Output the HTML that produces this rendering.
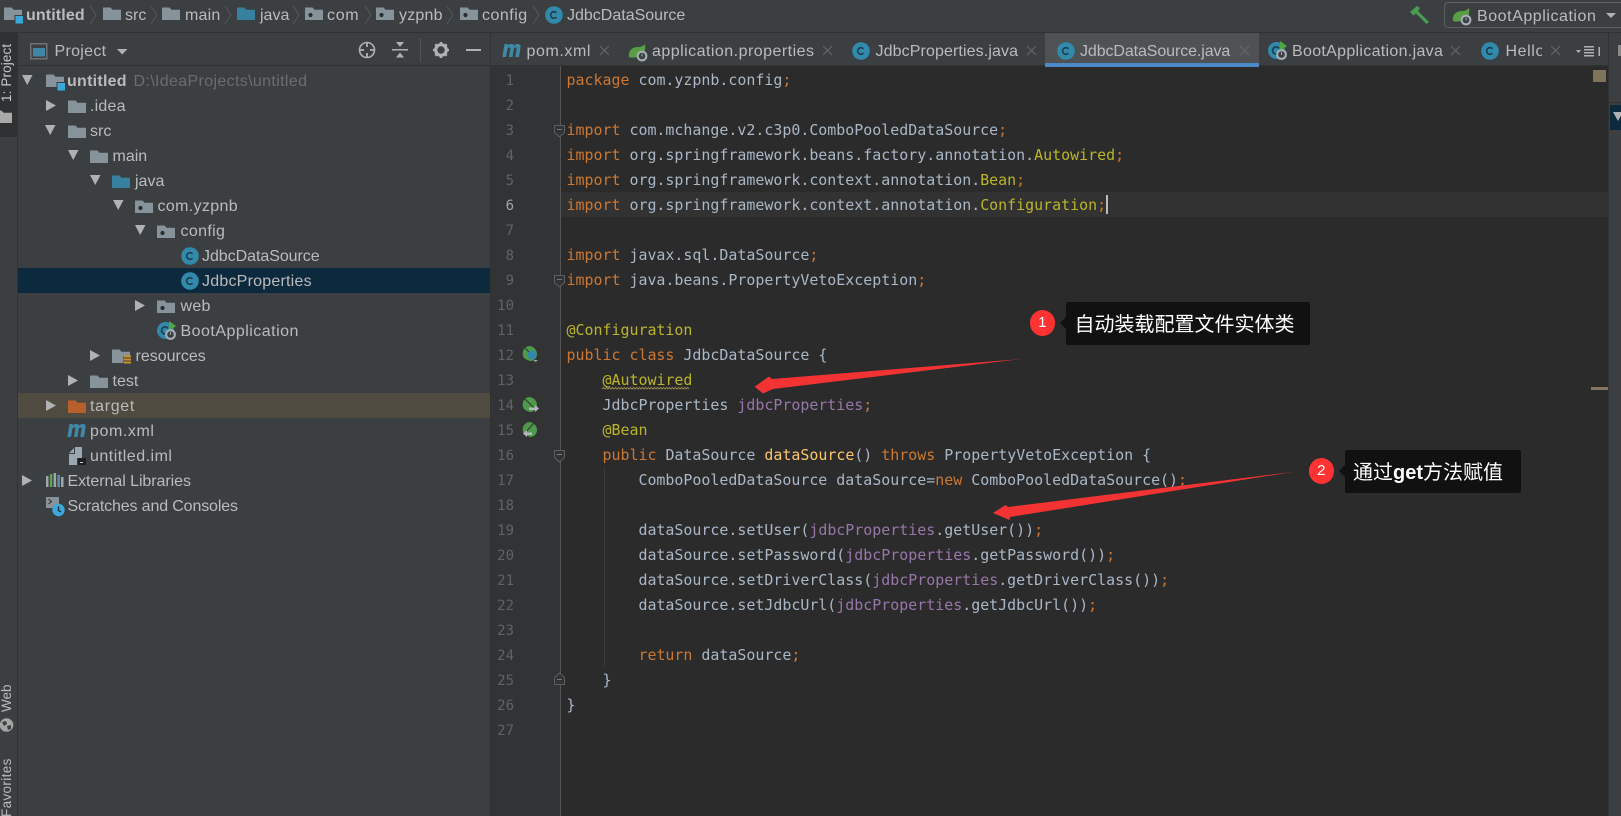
<!DOCTYPE html>
<html><head><meta charset="utf-8"><style>
html,body{margin:0;padding:0;width:1621px;height:816px;overflow:hidden;background:#3c3f41}
#r{position:relative;width:1621px;height:816px;overflow:hidden;background:#3c3f41;font-family:"Liberation Sans","Noto Sans CJK SC",sans-serif}
.b{position:absolute}
.t{position:absolute;white-space:pre;font-size:16px;line-height:25px;height:25px;color:#bbb;margin-top:1px}
.c{position:absolute;left:566.5px;white-space:pre;font-family:"DejaVu Sans Mono","Liberation Mono",monospace;font-size:14.95px;line-height:25px;height:25px;color:#a9b7c6}
.n{position:absolute;width:24px;left:490px;text-align:right;font-family:"DejaVu Sans Mono",monospace;font-size:14px;line-height:25px;color:#606366;margin-top:1px}
.c i{font-style:normal;color:#cc7832}.c u{text-decoration:none;color:#bbb529}.c s{text-decoration:none;color:#9876aa}.c b{font-weight:normal;color:#ffc66d}
svg.i{position:absolute;overflow:visible}
.rot{position:absolute;white-space:pre;font-size:13.5px;line-height:16px;color:#bbb;transform-origin:0 0;transform:rotate(-90deg)}
</style></head><body><div id="r">
<svg width="0" height="0" style="position:absolute"><defs>
<path id="f" d="M0 0.5h7.5l2 2.2H18V13H0z"/>
<g id="pk"><path d="M0 0.5h7.5l2 2.2H18V13H0z" fill="#87939a"/><circle cx="5.5" cy="8" r="2.1" fill="#2b2d2f"/></g>
<g id="mod"><path d="M0 0.5h7.5l2 2.2H18V13H0z" fill="#87939a"/><rect x="10.5" y="8" width="8" height="8" fill="#3c3f41"/><rect x="11.5" y="9" width="7.5" height="7.5" fill="#3aa8db"/></g>
<g id="cc"><circle cx="9" cy="9" r="8.8" fill="#3189ab"/><path d="M11.5 6.9A3.3 3.3 0 1 0 11.5 11.1" fill="none" stroke="#1f3d4b" stroke-width="1.6"/></g>
<g id="gear"><circle cx="0" cy="0" r="5.4" fill="#a3aeb6"/><circle cx="0" cy="0" r="3.3" fill="#3c3f41"/><path d="M0-2.400v2.800" stroke="#a3aeb6" stroke-width="1"/></g>
<g id="sp"><path d="M0 13C-1 6 4 3 9 3c3 0 5-1 7-3 1 6-1 12-7 13-3 .5-6 1-9 0z" fill="#5b9d44"/><use href="#gear" x="13" y="12"/></g>
<g id="bc"><circle cx="8.5" cy="9.5" r="8.5" fill="#3189ab"/><path d="M11 7.300A3.600 3.600 0 1 0 11 11.700" fill="none" stroke="#1f3d4b" stroke-width="1.700"/><path d="M12 0l7 5-7 5z" fill="#4fa83f"/><use href="#gear" x="13.500" y="13.500"/></g>
<path id="ra" d="M0 0l10 5.500L0 11z"/>
<path id="da" d="M0 0h10.500L5.200 10z"/>
<path id="x" d="M0 0L9 9M9 0L0 9" stroke="#63676a" stroke-width="1.100" fill="none"/>
<path id="ch" d="M0 4l6 9-6 9" stroke="#55595c" stroke-width="1" fill="none"/>
<path id="fd" d="M.5 .5h10v7l-5 4.500-5-4.500z" fill="#313335" stroke="#5c5f62"/>
<path id="lf" d="M8 0a8 8 0 0 0-6 3 8 8 0 0 0 0 9c1 1 3 2 6 3 4 0 7-3 7-7C15 4 12 1 8 0z" fill="#4f9a4a"/>
</defs></svg>

<!-- top bar -->
<div class="b" style="left:0;top:32px;width:1621px;height:1px;background:#323232"></div>
<svg class="i" style="left:4px;top:7px" width="19" height="17"><use href="#mod"/></svg>
<div class="t" style="left:26px;top:2px;font-weight:bold;letter-spacing:.12px">untitled</div>
<svg class="i" style="left:90px;top:2px" width="7" height="27"><use href="#ch"/></svg>
<svg class="i" style="left:102.500px;top:7px" width="18" height="14" fill="#87939a"><use href="#f"/></svg>
<div class="t" style="left:125px;top:2px">src</div>
<svg class="i" style="left:151px;top:2px" width="7" height="27"><use href="#ch"/></svg>
<svg class="i" style="left:162px;top:7px" width="18" height="14" fill="#87939a"><use href="#f"/></svg>
<div class="t" style="left:185px;top:2px;letter-spacing:.2px">main</div>
<svg class="i" style="left:225px;top:2px" width="7" height="27"><use href="#ch"/></svg>
<svg class="i" style="left:237px;top:7px" width="18" height="14" fill="#37809f"><use href="#f"/></svg>
<div class="t" style="left:260px;top:2px">java</div>
<svg class="i" style="left:293px;top:2px" width="7" height="27"><use href="#ch"/></svg>
<svg class="i" style="left:305px;top:7px" width="18" height="14"><use href="#pk"/></svg>
<div class="t" style="left:327px;top:2px;letter-spacing:.7px">com</div>
<svg class="i" style="left:365px;top:2px" width="7" height="27"><use href="#ch"/></svg>
<svg class="i" style="left:376px;top:7px" width="18" height="14"><use href="#pk"/></svg>
<div class="t" style="left:399px;top:2px;letter-spacing:.2px">yzpnb</div>
<svg class="i" style="left:447px;top:2px" width="7" height="27"><use href="#ch"/></svg>
<svg class="i" style="left:460px;top:7px" width="18" height="14"><use href="#pk"/></svg>
<div class="t" style="left:482px;top:2px;letter-spacing:.5px">config</div>
<svg class="i" style="left:533px;top:2px" width="7" height="27"><use href="#ch"/></svg>
<svg class="i" style="left:545px;top:6px" width="18" height="18"><use href="#cc"/></svg>
<div class="t" style="left:567px;top:2px">JdbcDataSource</div>
<svg class="i" style="left:1410px;top:6px" width="20" height="18"><path d="M0 6L7 0l3 2-2 3 11 11-2.500 2L6 7.500 3.500 9.500z" fill="#499c54"/></svg>
<div class="b" style="left:1444px;top:2px;width:190px;height:26px;border:1px solid #5e6060;border-radius:4px;box-sizing:border-box"></div>
<svg class="i" style="left:1453px;top:8px" width="19" height="18"><use href="#sp"/></svg>
<div class="t" style="left:1477px;top:3px;letter-spacing:.55px">BootApplication</div>
<svg class="i" style="left:1606px;top:13px" width="10" height="5" fill="#afb1b3"><path d="M0 0h10L5 5z"/></svg>

<!-- left strip -->
<div class="b" style="left:0;top:33px;width:17px;height:104px;background:#2f3133"></div>
<div class="b" style="left:17px;top:33px;width:1px;height:783px;background:#323232"></div>
<div class="rot" style="left:-1px;top:102px;color:#c8c8c8;letter-spacing:.12px">1: Project</div>
<svg class="i" style="left:-6px;top:110px" width="18" height="13" fill="#a9a9a9"><use href="#f"/></svg>
<div class="rot" style="left:-1px;top:712px">Web</div>
<svg class="i" style="left:0;top:718px" width="14" height="14"><circle cx="6.500" cy="7" r="6.800" fill="#a5a5a5"/><path d="M2 4l4-1 1 3-3 2zM7 8l4-1 0 4-3 1z" fill="#3c3f41"/></svg>
<div class="rot" style="left:-1px;top:817px;letter-spacing:.35px">Favorites</div>

<!-- project header -->
<div class="b" style="left:18px;top:65px;width:472px;height:1px;background:#323232"></div>
<svg class="i" style="left:30px;top:43px" width="18" height="16"><rect x=".75" y=".75" width="16" height="15" fill="none" stroke="#6e7072" stroke-width="1.500"/><rect x="3" y="5" width="12" height="8.500" fill="#3f86a5"/></svg>
<div class="t" style="left:54.500px;top:38px;letter-spacing:.3px">Project</div>
<svg class="i" style="left:117px;top:49px" width="11" height="6" fill="#afb1b3"><path d="M0 0h10.500L5.200 5.500z"/></svg>
<svg class="i" style="left:358px;top:41px" width="18" height="18" fill="none" stroke="#afb1b3"><circle cx="9" cy="9" r="7.500" stroke-width="1.600"/><path d="M9 1v5M9 12v5M1 9h5M12 9h5" stroke-width="1.800"/></svg>
<svg class="i" style="left:392px;top:41px" width="16" height="18" fill="#afb1b3"><rect y="8" width="16" height="1.500"/><path d="M4 1h8L8 6zM4 16.500h8L8 11.500z"/></svg>
<div class="b" style="left:420px;top:38px;width:1px;height:24px;background:#505355"></div>
<svg class="i" style="left:433px;top:42px" width="16" height="16"><circle cx="8" cy="8" r="5.300" fill="none" stroke="#afb1b3" stroke-width="3.200"/><path d="M8 0v3M8 13v3M0 8h3M13 8h3M2.300 2.300l2 2M11.700 11.700l2 2M2.300 13.700l2-2M11.700 4.300l2-2" stroke="#afb1b3" stroke-width="2.400"/></svg>
<div class="b" style="left:466px;top:49px;width:15px;height:2px;background:#afb1b3"></div>

<!-- tree -->
<div class="b" style="left:18px;top:268px;width:472px;height:25px;background:#0d293e"></div>
<div class="b" style="left:18px;top:393px;width:472px;height:25px;background:#4f4b41"></div>
<svg class="i" style="left:22px;top:75px" width="11" height="10" fill="#afb1b3"><use href="#da"/></svg>
<svg class="i" style="left:45.500px;top:74px" width="19" height="17"><use href="#mod"/></svg>
<div class="t" style="left:67px;top:68px;font-weight:bold;letter-spacing:.26px">untitled</div>
<div class="t" style="left:133.500px;top:68px;color:#6a6d6f;letter-spacing:.35px">D:\IdeaProjects\untitled</div>

<svg class="i" style="left:45.500px;top:100px" width="10" height="11" fill="#afb1b3"><use href="#ra"/></svg>
<svg class="i" style="left:67.500px;top:99.500px" width="18" height="14" fill="#87939a"><use href="#f"/></svg>
<div class="t" style="left:90px;top:93px;letter-spacing:.2px">.idea</div>

<svg class="i" style="left:45px;top:125px" width="11" height="10" fill="#afb1b3"><use href="#da"/></svg>
<svg class="i" style="left:67.500px;top:124.500px" width="18" height="14" fill="#87939a"><use href="#f"/></svg>
<div class="t" style="left:90px;top:118px">src</div>

<svg class="i" style="left:67.500px;top:150px" width="11" height="10" fill="#afb1b3"><use href="#da"/></svg>
<svg class="i" style="left:90px;top:149.500px" width="18" height="14" fill="#87939a"><use href="#f"/></svg>
<div class="t" style="left:112.500px;top:143px">main</div>

<svg class="i" style="left:89.500px;top:175px" width="11" height="10" fill="#afb1b3"><use href="#da"/></svg>
<svg class="i" style="left:112px;top:174.500px" width="18" height="14" fill="#37809f"><use href="#f"/></svg>
<div class="t" style="left:135px;top:168px">java</div>

<svg class="i" style="left:112.500px;top:200px" width="11" height="10" fill="#afb1b3"><use href="#da"/></svg>
<svg class="i" style="left:135px;top:199.500px" width="18" height="14"><use href="#pk"/></svg>
<div class="t" style="left:157.500px;top:193px;letter-spacing:.34px">com.yzpnb</div>

<svg class="i" style="left:134.500px;top:225px" width="11" height="10" fill="#afb1b3"><use href="#da"/></svg>
<svg class="i" style="left:157px;top:224.500px" width="18" height="14"><use href="#pk"/></svg>
<div class="t" style="left:180.500px;top:218px;letter-spacing:.34px">config</div>

<svg class="i" style="left:180.500px;top:247px" width="18" height="18"><use href="#cc"/></svg>
<div class="t" style="left:202px;top:243px;letter-spacing:-.05px">JdbcDataSource</div>

<svg class="i" style="left:180.500px;top:272px" width="18" height="18"><use href="#cc"/></svg>
<div class="t" style="left:202px;top:268px;letter-spacing:.22px">JdbcProperties</div>

<svg class="i" style="left:135px;top:300px" width="10" height="11" fill="#afb1b3"><use href="#ra"/></svg>
<svg class="i" style="left:157px;top:299.500px" width="18" height="14"><use href="#pk"/></svg>
<div class="t" style="left:180.500px;top:293px;letter-spacing:.3px">web</div>

<svg class="i" style="left:157px;top:321px" width="19" height="20"><use href="#bc"/></svg>
<div class="t" style="left:180.500px;top:318px;letter-spacing:.48px">BootApplication</div>

<svg class="i" style="left:89.500px;top:350px" width="10" height="11" fill="#afb1b3"><use href="#ra"/></svg>
<svg class="i" style="left:112px;top:348.500px" width="19" height="17"><path d="M0 .5h7.500l2 2.200H18V7h-6.500v7H0z" fill="#87939a"/><path d="M12 7.500h7M12 10.500h7M12 13.500h7" stroke="#c9912f" stroke-width="2"/></svg>
<div class="t" style="left:135.500px;top:343px">resources</div>

<svg class="i" style="left:67.500px;top:375px" width="10" height="11" fill="#afb1b3"><use href="#ra"/></svg>
<svg class="i" style="left:90px;top:374.500px" width="18" height="14" fill="#87939a"><use href="#f"/></svg>
<div class="t" style="left:112.500px;top:368px">test</div>

<svg class="i" style="left:45.500px;top:400px" width="10" height="11" fill="#afb1b3"><use href="#ra"/></svg>
<svg class="i" style="left:67.500px;top:399.500px" width="18" height="14" fill="#b85f2e"><use href="#f"/></svg>
<div class="t" style="left:90px;top:393px;letter-spacing:.68px">target</div>

<svg class="i" style="left:67px;top:424px" width="19" height="13" fill="#3f88a8"><path d="M2.500 0h3.200l-.2 1.500C7 .3 8.500-.2 10 0c1.200.2 1.800.9 2 1.700C13.400.4 15-.2 16.500.1c1.800.4 2.300 1.700 2 3.400L17 13h-3.700l1.300-8c.2-1-.1-1.600-.9-1.600-1 0-1.800.7-2 1.800L10.500 13H7l1.300-8c.2-1-.1-1.600-.9-1.600-1 0-1.800.7-2 1.800L4 13H.4z"/></svg>
<div class="t" style="left:90px;top:418px;letter-spacing:.58px">pom.xml</div>

<svg class="i" style="left:69px;top:447px" width="17" height="18"><path d="M0 6L5 1v5zM6 0h7v11H8v7H0V7h6z" fill="#9aa7b0"/><rect x="9" y="11" width="8" height="7" fill="#1f1f1f"/><rect x="11" y="15" width="3" height="1" fill="#ccc"/></svg>
<div class="t" style="left:90px;top:443px;letter-spacing:.5px">untitled.iml</div>

<svg class="i" style="left:22px;top:475px" width="10" height="11" fill="#afb1b3"><use href="#ra"/></svg>
<svg class="i" style="left:45.500px;top:473px" width="18" height="15"><rect y="3" width="2.500" height="11" fill="#9aa7b0"/><rect x="3.800" y="1" width="2.500" height="13" fill="#5fa34c"/><rect x="7.600" y="0" width="2.500" height="14" fill="#9aa7b0"/><rect x="11.400" y="2" width="2.500" height="12" fill="#5f90a8"/><rect x="15" y="4" width="2.500" height="10" fill="#9aa7b0"/></svg>
<div class="t" style="left:67.500px;top:468px;letter-spacing:-.06px">External Libraries</div>

<svg class="i" style="left:45.500px;top:497px" width="19" height="20"><rect width="13" height="11" fill="#87939a"/><path d="M2.500 2l3 2.500-3 2.500" stroke="#2b2d2f" fill="none"/><circle cx="12.500" cy="13" r="6.200" fill="#3aa8db"/><path d="M12.500 9.500V13.500l2.500 1.500" stroke="#1c2a33" stroke-width="1.300" fill="none"/></svg>
<div class="t" style="left:67.500px;top:493px;letter-spacing:-.14px">Scratches and Consoles</div>

<!-- editor -->
<div class="b" style="left:490px;top:33px;width:1px;height:783px;background:#323232"></div>
<div class="b" style="left:491px;top:66px;width:69px;height:750px;background:#313335"></div>
<div class="b" style="left:560px;top:66px;width:1048px;height:750px;background:#2b2b2b"></div>
<div class="b" style="left:560px;top:192px;width:1048px;height:25px;background:#323232"></div>
<div class="b" style="left:559.500px;top:66px;width:1px;height:750px;background:#555"></div>
<div class="b" style="left:604px;top:467px;width:1px;height:200px;background:#3b3b3b"></div>
<div class="b" style="left:491px;top:65px;width:1117px;height:1px;background:#323232"></div>

<!-- tabs -->
<div class="b" style="left:1045px;top:33px;width:214px;height:30px;background:#4e5254"></div>
<div class="b" style="left:1045px;top:63px;width:214px;height:4px;background:#4a88c7"></div>
<svg class="i" style="left:502px;top:44px" width="19" height="13" fill="#3f88a8"><path d="M2.500 0h3.200l-.2 1.500C7 .3 8.500-.2 10 0c1.200.2 1.800.9 2 1.700C13.400.4 15-.2 16.500.1c1.800.4 2.300 1.700 2 3.400L17 13h-3.700l1.300-8c.2-1-.1-1.600-.9-1.600-1 0-1.800.7-2 1.800L10.500 13H7l1.300-8c.2-1-.1-1.600-.9-1.600-1 0-1.800.7-2 1.800L4 13H.4z"/></svg>
<div class="t" style="left:526.500px;top:38px;letter-spacing:.58px">pom.xml</div>
<svg class="i" style="left:600px;top:46px" width="9" height="9"><use href="#x"/></svg>
<svg class="i" style="left:628.500px;top:44px" width="19" height="18"><use href="#sp"/></svg>
<div class="t" style="left:652px;top:38px;letter-spacing:.47px">application.properties</div>
<svg class="i" style="left:823px;top:46px" width="9" height="9"><use href="#x"/></svg>
<svg class="i" style="left:852px;top:42px" width="18" height="18"><use href="#cc"/></svg>
<div class="t" style="left:875.500px;top:38px;letter-spacing:.11px">JdbcProperties.java</div>
<svg class="i" style="left:1027px;top:46px" width="9" height="9"><use href="#x"/></svg>
<svg class="i" style="left:1057px;top:42px" width="18" height="18"><use href="#cc"/></svg>
<div class="t" style="left:1080px;top:38px;letter-spacing:-.1px">JdbcDataSource.java</div>
<svg class="i" style="left:1240px;top:46px" width="9" height="9"><use href="#x"/></svg>
<svg class="i" style="left:1268px;top:41px" width="19" height="20"><use href="#bc"/></svg>
<div class="t" style="left:1292px;top:38px;letter-spacing:.31px">BootApplication.java</div>
<svg class="i" style="left:1451px;top:46px" width="9" height="9"><use href="#x"/></svg>
<svg class="i" style="left:1481px;top:42px" width="18" height="18"><use href="#cc"/></svg>
<div class="t" style="left:1505.500px;top:38px;width:36px;overflow:hidden;letter-spacing:.6px">Hello</div>
<svg class="i" style="left:1551px;top:46px" width="9" height="9"><use href="#x"/></svg>
<svg class="i" style="left:1576px;top:44px" width="26" height="13" fill="#afb1b3"><path d="M0 6h5L2.500 9zM8 2h10v1.500H8zM8 5h10v1.500H8zM8 8h10v1.500H8zM8 11h10v1.500H8z"/><rect x="22.500" y="3" width="1.500" height="9"/></svg>

<!-- right strip -->
<div class="b" style="left:1608px;top:33px;width:1px;height:783px;background:#323232"></div>
<div class="b" style="left:1609px;top:102px;width:12px;height:1px;background:#323232"></div>
<div class="b" style="left:1610px;top:105px;width:11px;height:25px;background:#0d293e"></div>
<svg class="i" style="left:1613px;top:112px" width="8" height="10" fill="#afb1b3"><path d="M0 0h10L5 9z"/></svg>
<div class="b" style="left:1618px;top:45px;width:3px;height:11px;background:#8b8b8b"></div>
<div class="b" style="left:1593px;top:70px;width:13px;height:12px;background:#7e735b"></div>
<div class="b" style="left:1591px;top:387px;width:17px;height:3px;background:#827661"></div>

<!-- line numbers -->
<div class="n" style="top:68px">1</div>
<div class="n" style="top:93px">2</div>
<div class="n" style="top:118px">3</div>
<div class="n" style="top:143px">4</div>
<div class="n" style="top:168px">5</div>
<div class="n" style="top:193px;color:#a4a3a3">6</div>
<div class="n" style="top:218px">7</div>
<div class="n" style="top:243px">8</div>
<div class="n" style="top:268px">9</div>
<div class="n" style="top:293px">10</div>
<div class="n" style="top:318px">11</div>
<div class="n" style="top:343px">12</div>
<div class="n" style="top:368px">13</div>
<div class="n" style="top:393px">14</div>
<div class="n" style="top:418px">15</div>
<div class="n" style="top:443px">16</div>
<div class="n" style="top:468px">17</div>
<div class="n" style="top:493px">18</div>
<div class="n" style="top:518px">19</div>
<div class="n" style="top:543px">20</div>
<div class="n" style="top:568px">21</div>
<div class="n" style="top:593px">22</div>
<div class="n" style="top:618px">23</div>
<div class="n" style="top:643px">24</div>
<div class="n" style="top:668px">25</div>
<div class="n" style="top:693px">26</div>
<div class="n" style="top:718px">27</div>

<!-- gutter icons -->
<svg class="i" style="left:522px;top:346px" width="17" height="16"><use href="#lf"/><path d="M3 2l7 7" stroke="#313335"/><circle cx="10" cy="9" r="4.500" fill="#3189ab"/><path d="M11 14h5l-2.500 2z" fill="#9aa7b0"/></svg>
<svg class="i" style="left:522px;top:397px" width="17" height="16"><use href="#lf"/><path d="M3 2l10 10" stroke="#313335"/><path d="M7 10.500h6V8l4 3.500-4 3.500v-2H7z" fill="#b0b8bd"/></svg>
<svg class="i" style="left:522px;top:422px" width="17" height="16"><use href="#lf"/><path d="M12 1L3 11" stroke="#313335"/><path d="M10 10.500H5V8l-4 3.500 4 3.500v-2h5z" fill="#b0b8bd"/></svg>
<svg class="i" style="left:554px;top:125px" width="11" height="13"><use href="#fd"/><rect x="3" y="4" width="5" height="1" fill="#777"/></svg>
<svg class="i" style="left:554px;top:275px" width="11" height="13"><use href="#fd"/><rect x="3" y="4" width="5" height="1" fill="#777"/></svg>
<svg class="i" style="left:554px;top:450px" width="11" height="13"><use href="#fd"/><rect x="3" y="4" width="5" height="1" fill="#777"/></svg>
<svg class="i" style="left:554px;top:672px" width="11" height="13"><path d="M.5 12.500h10v-7l-5-4.500-5 4.500z" fill="#313335" stroke="#5c5f62"/><rect x="3" y="7" width="5" height="1" fill="#777"/></svg>

<!-- code -->
<div class="c" style="top:68px"><i>package </i>com.yzpnb.config<i>;</i></div>
<div class="c" style="top:118px"><i>import </i>com.mchange.v2.c3p0.ComboPooledDataSource<i>;</i></div>
<div class="c" style="top:143px"><i>import </i>org.springframework.beans.factory.annotation.<u>Autowired</u><i>;</i></div>
<div class="c" style="top:168px"><i>import </i>org.springframework.context.annotation.<u>Bean</u><i>;</i></div>
<div class="c" style="top:193px"><i>import </i>org.springframework.context.annotation.<u>Configuration</u><i>;</i></div>
<div class="b" style="left:1105.500px;top:195px;width:2px;height:19px;background:#bbb"></div>
<div class="c" style="top:243px"><i>import </i>javax.sql.DataSource<i>;</i></div>
<div class="c" style="top:268px"><i>import </i>java.beans.PropertyVetoException<i>;</i></div>
<div class="c" style="top:318px"><u>@Configuration</u></div>
<div class="c" style="top:343px"><i>public class </i>JdbcDataSource {</div>
<div class="c" style="top:368px">    <u>@Autowired</u></div>
<svg class="i" style="left:602px;top:387px" width="90" height="4"><path d="M0 2l1.500-1.500 1.500 1.500 1.500-1.500 1.500 1.500 1.500-1.500 1.500 1.500 1.500-1.500 1.500 1.500 1.500-1.500 1.500 1.500 1.500-1.500 1.500 1.500 1.500-1.500 1.500 1.500 1.500-1.500 1.500 1.500 1.500-1.500 1.500 1.500 1.500-1.500 1.500 1.500 1.500-1.500 1.500 1.500 1.500-1.500 1.500 1.500 1.500-1.500 1.500 1.500 1.500-1.500 1.500 1.500 1.500-1.500 1.500 1.500 1.500-1.500 1.500 1.500 1.500-1.500 1.500 1.500 1.500-1.500 1.500 1.500 1.500-1.500 1.500 1.500 1.500-1.500 1.500 1.500 1.500-1.500 1.500 1.500 1.500-1.500 1.500 1.500 1.500-1.500 1.500 1.500 1.500-1.500 1.500 1.500 1.500-1.500 1.500 1.500 1.500-1.500 1.500 1.500 1.500-1.500 1.500 1.500 1.500-1.500 1.500 1.500 1.500-1.500 1.500 1.500" fill="none" stroke="#8f8450" stroke-width="1"/></svg>
<div class="c" style="top:393px">    JdbcProperties <s>jdbcProperties</s><i>;</i></div>
<div class="c" style="top:418px">    <u>@Bean</u></div>
<div class="c" style="top:443px">    <i>public </i>DataSource <b>dataSource</b>() <i>throws </i>PropertyVetoException {</div>
<div class="c" style="top:468px">        ComboPooledDataSource dataSource=<i>new </i>ComboPooledDataSource()<i>;</i></div>
<div class="c" style="top:518px">        dataSource.setUser(<s>jdbcProperties</s>.getUser())<i>;</i></div>
<div class="c" style="top:543px">        dataSource.setPassword(<s>jdbcProperties</s>.getPassword())<i>;</i></div>
<div class="c" style="top:568px">        dataSource.setDriverClass(<s>jdbcProperties</s>.getDriverClass())<i>;</i></div>
<div class="c" style="top:593px">        dataSource.setJdbcUrl(<s>jdbcProperties</s>.getJdbcUrl())<i>;</i></div>
<div class="c" style="top:643px">        <i>return </i>dataSource<i>;</i></div>
<div class="c" style="top:668px">    }</div>
<div class="c" style="top:693px">}</div>

<!-- annotations -->
<svg class="i" style="left:0;top:0" width="1621" height="816" fill="#f33333">
<path d="M754.600 386.700L769 376.500 772 379 1021 359 773 389 763 393.500z"/>
<path d="M993 513L1005.500 505 1008 507 1294.300 471.700 1010 517 1009.700 520z"/>
</svg>
<div class="b" style="left:1029.500px;top:310px;width:25.500px;height:26px;border-radius:50%;background:#f33;color:#fff;text-align:center;font-size:15px;line-height:25px">1</div>
<div class="b" style="left:1066px;top:302px;width:244px;height:43px;background:#111;border-radius:2px"></div>
<svg class="i" style="left:1060px;top:317px" width="6" height="12" fill="#111"><path d="M6 0L0 6l6 6z"/></svg>
<div class="t" style="left:1074.500px;top:306px;height:34px;margin-top:0;line-height:34px;font-size:20px;color:#fff;font-family:'Noto Sans CJK SC','WenQuanYi Zen Hei',sans-serif">自动装载配置文件实体类</div>
<div class="b" style="left:1308.500px;top:458px;width:25.500px;height:26px;border-radius:50%;background:#f33;color:#fff;text-align:center;font-size:15px;line-height:25px">2</div>
<div class="b" style="left:1345px;top:450px;width:176px;height:43px;background:#111;border-radius:2px"></div>
<svg class="i" style="left:1339px;top:465px" width="6" height="12" fill="#111"><path d="M6 0L0 6l6 6z"/></svg>
<div class="t" style="left:1353px;top:454px;height:34px;margin-top:0;line-height:34px;font-size:20px;color:#fff;font-family:'Noto Sans CJK SC','WenQuanYi Zen Hei',sans-serif">通过<span style="font-family:'Liberation Sans',sans-serif;font-weight:bold">get</span>方法赋值</div>
</div></body></html>
